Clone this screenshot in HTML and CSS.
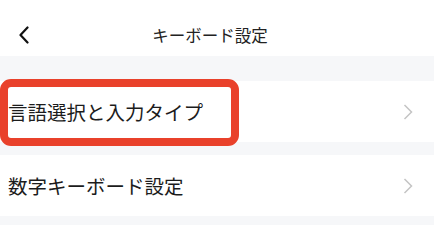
FILE: index.html
```html
<!DOCTYPE html>
<html lang="ja">
<head>
    <meta charset="UTF-8">
    <title>キーボード設定</title>
    <link rel="stylesheet" href="styles.css">
</head>
<body>
<div class="header">
    <svg class="back" width="12" height="18" viewBox="0 0 12 18">
        <path d="M9.5 1.5 L2.5 9 L9.5 16.5" fill="none" stroke="#111" stroke-width="2.2" stroke-linecap="round" stroke-linejoin="round"/>
    </svg>
    <div class="title">キーボード設定</div>
</div>

<div class="list first">
    <div class="row">
        <span class="label">言語選択と入力タイプ</span>
        <svg class="arrow" width="10" height="16" viewBox="0 0 10 16">
            <path d="M1.5 1 L8.5 8 L1.5 15" fill="none" stroke="#c4c4c4" stroke-width="1.5"/>
        </svg>
        <div class="mark"></div>
    </div>
</div>

<div class="list">
    <div class="row">
        <span class="label">数字キーボード設定</span>
        <svg class="arrow" width="10" height="16" viewBox="0 0 10 16">
            <path d="M1.5 1 L8.5 8 L1.5 15" fill="none" stroke="#c4c4c4" stroke-width="1.5"/>
        </svg>
    </div>
</div>
</body>
</html>
```
FILE: styles.css
```css
*{
    margin:0;
    padding:0;
    box-sizing: border-box;
}

body{
    background: #f6f7f9;
    font-family: "Noto Sans CJK JP", "Noto Sans", sans-serif;
    color: #1c1c1c;
}

.header{
    height: 56px;
    background: #fff;
    display: flex;
    align-items: center;
    padding: 13px 18px 0 18px;
}
.back{
    flex: none;
}
.title{
    flex: 1;
    text-align: center;
    font-size: 16.5px;
    color: #222;
    padding-right: 26px;
}

.list{
    margin-top: 13px;
    background: #fff;
}
.list.first{
    margin-top: 25px;
}

.row{
    position: relative;         /*赤枠を重ねるため*/
    height: 61px;
    display: flex;
    align-items: center;
    justify-content: space-between;
    padding: 0 21px 0 8px;
}
.label{
    font-size: 19.5px;
    line-height: 1;
}

.mark{
    position: absolute;
    left: 0;
    top: -2px;
    width: 239px;
    height: 67px;
    border: 8px solid #e9412b;
    border-radius: 11px;
}
```
